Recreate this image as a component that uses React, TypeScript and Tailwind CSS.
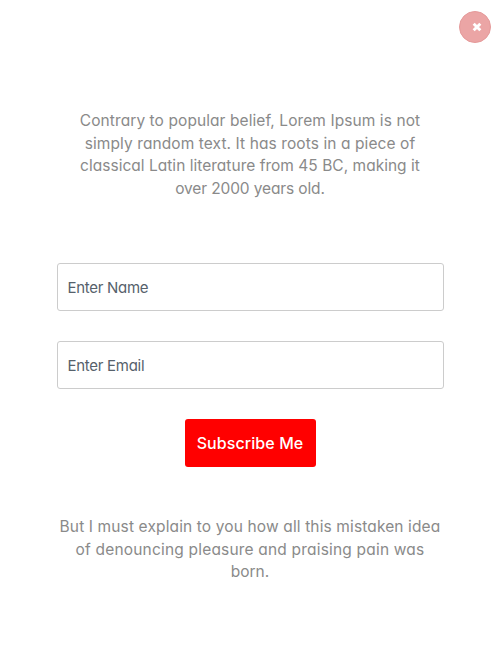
const intro = [
  { text: 'Contrary to popular belief, Lorem Ipsum is not', track: 'tracking-[0.08px]' },
  { text: 'simply random text. It has roots in a piece of', track: 'tracking-[0.09px]' },
  { text: 'classical Latin literature from 45 BC, making it', track: 'tracking-[0.02px]' },
  { text: 'over 2000 years old.', track: 'tracking-[-0.12px]' },
];

const outro = [
  { text: 'But I must explain to you how all this mistaken idea', track: 'tracking-[0.13px]' },
  { text: 'of denouncing pleasure and praising pain was', track: 'tracking-[0.19px]' },
  { text: 'born.', track: 'tracking-[0px]' },
];

function Copy({ lines, className }: { lines: { text: string; track: string }[]; className: string }) {
  return (
    <p className={`text-center text-[15.5px] leading-[22.5px] text-[#8a8a8a] ${className}`}>
      {lines.map((line) => (
        <span key={line.text} className={`block whitespace-nowrap ${line.track}`}>
          {line.text}
        </span>
      ))}
    </p>
  );
}

const field =
  "h-[48px] w-full rounded-[3px] border border-[#cccccc] bg-white px-[10px] text-[15px] tracking-[-0.28px] text-[#56616b] placeholder:text-[#56616b] placeholder:opacity-100 outline-none";

export default function App() {
  return (
    <main className="relative flex h-[656px] w-[500px] flex-col items-center overflow-hidden bg-white font-['Inter',sans-serif] [font-feature-settings:'cv11']">
      <button
        aria-label="Close"
        className="absolute top-[11px] left-[459px] flex size-8 items-center justify-center rounded-full border border-[#e59a9a] bg-[#eba5a5]"
      >
        <svg viewBox="0 0 10 10" className="ml-[3px] size-[10px]" fill="none" stroke="white" strokeWidth="2.9" strokeLinecap="square">
          <path d="M2.7 2.7l4.6 4.6M7.3 2.7l-4.6 4.6" />
        </svg>
      </button>
      <Copy lines={intro} className="mt-[110px]" />
      <form className="mt-[63px] flex w-[387px] flex-col items-center">
        <input className={field} placeholder="Enter Name" />
        <input className={`${field} mt-[30px]`} placeholder="Enter Email" />
        <button
          type="button"
          className="mt-[30px] h-[48px] w-[131px] rounded-[3px] bg-[#ff0000] text-base font-medium tracking-[0.08px] whitespace-nowrap text-white"
        >
          Subscribe Me
        </button>
      </form>
      <Copy lines={outro} className="mt-[49px]" />
    </main>
  );
}
